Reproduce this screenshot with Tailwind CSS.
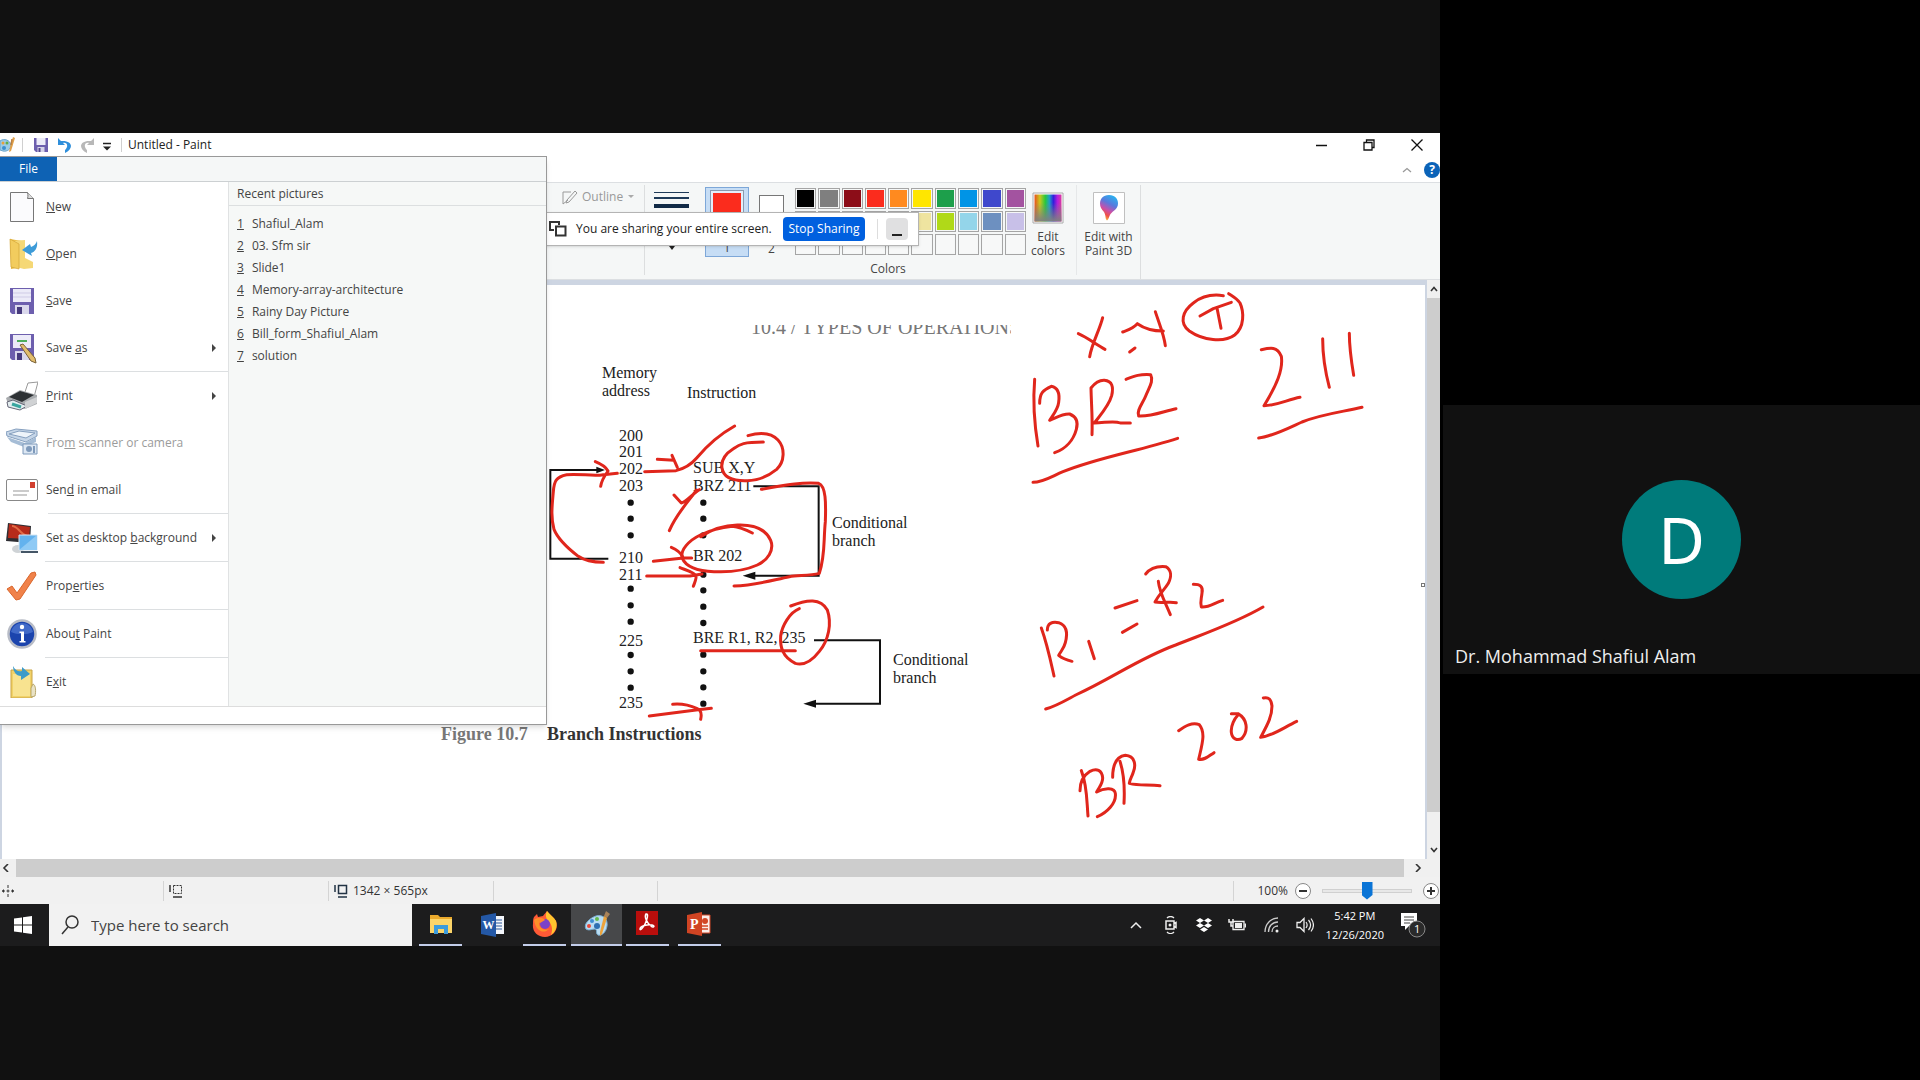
<!DOCTYPE html>
<html lang="en">
<head>
<meta charset="utf-8">
<meta name="viewport" content="width=device-width, initial-scale=1">
<title>Untitled - Paint</title>
<script src="https://cdn.jsdelivr.net/npm/@tailwindcss/browser@4"></script>
</head>
<body class="flex min-h-screen bg-black font-['Open_Sans','Noto_Sans',sans-serif] text-xs text-[#444]">

<!-- Shared screen -->
<main class="flex w-3/4 shrink-0 flex-col justify-center overflow-hidden bg-[#111] pb-px">
  <div class="relative flex flex-col bg-white">

    <!-- Title bar -->
    <header class="flex h-6 items-center justify-between">
      <div class="flex items-center">
        <svg class="h-4 w-4" viewBox="0 0 16 16" aria-hidden="true"><path d="M0 4C4 1 10 3 11 8c0 4-4 7-8 6L0 13z" fill="#9ccbe8" stroke="#6aa5cc"/><circle cx="3" cy="6" r="1.500" fill="#e8a13a"/><circle cx="7" cy="6" r="1.500" fill="#5fae4d"/><circle cx="4" cy="11" r="2" fill="#3b8fd0"/><path d="M13 0l2 1-4 13-2 1 1-5z" fill="#dfa04a"/><path d="M12 2l-1 6" stroke="#b98044" stroke-width="1.500"/></svg>
        <span class="ml-1.5 h-3.5 w-px bg-[#d0d0d0]"></span>
        <button class="ml-2.5" aria-label="Save"><svg class="h-4 w-4" viewBox="0 0 16 16"><path d="M1 1h14v14H3l-2-2z" fill="#6d5fae"/><path d="M3.500 1h9v7h-9z" fill="#ecebf8"/><path d="M4.500 10h7v5h-7z" fill="#d5d2e8"/><path d="M5.500 11h2v4h-2z" fill="#51448c"/></svg></button>
        <button class="ml-2" aria-label="Undo"><svg class="h-4 w-4" viewBox="0 0 16 16"><path d="M1 1v7h7L6 6c4-1 6 3 2 7v3c9-4 8-13-4-12z" fill="#2f8fdb"/></svg></button>
        <button class="ml-1.5" aria-label="Redo"><svg class="h-4 w-4" viewBox="0 0 16 16"><path d="M15 1v7H8l2-2C6 5 4 9 8 13v3C-1 12 0 3 12 4z" fill="#b8b8b8"/></svg></button>
        <button class="ml-2" aria-label="Customize toolbar"><svg class="h-3.5 w-2" viewBox="0 0 8 14"><path d="M0 5.500h8" stroke="#222" stroke-width="1.500"/><path d="M0 8.500h8l-4 4z" fill="#222"/></svg></button>
        <span class="ml-2.5 h-3.5 w-px bg-[#d0d0d0]"></span>
        <h1 class="ml-1.5 text-[#222]">Untitled - Paint</h1>
      </div>
      <div class="flex items-center gap-9 pr-[17px]">
        <button aria-label="Minimize"><svg class="h-3 w-3" viewBox="0 0 12 12"><path d="M1 6.500h11" stroke="#111" stroke-width="1.500"/></svg></button>
        <button aria-label="Restore"><svg class="h-3 w-3" viewBox="0 0 12 12"><path d="M1 3.500h8v7.500H1z M3.500 3V1H11v7.500H9" fill="none" stroke="#111" stroke-width="1.300"/></svg></button>
        <button aria-label="Close"><svg class="h-3 w-3" viewBox="0 0 12 12"><path d="M.5.500l11 11m0-11l-11 11" stroke="#111" stroke-width="1.300"/></svg></button>
      </div>
    </header>

    <!-- Tab strip -->
    <div class="flex h-[25px] items-center justify-end gap-3 overflow-hidden">
      <button aria-label="Collapse ribbon"><svg class="h-2 w-2.5" viewBox="0 0 10 8"><path d="M1 6l4-3.500L9 6" fill="none" stroke="#999" stroke-width="1.300"/></svg></button>
      <button class="h-4 w-4 rounded-full bg-[#0b63b8] text-xs leading-4 font-bold text-white" aria-label="Help">?</button>
    </div>

    <!-- Ribbon -->
    <div class="flex h-[98px] overflow-hidden border-y border-[#dcdfe2] bg-[#f5f7f7] pt-0.5 pl-[562px]">
      <div class="flex h-[90px] w-[83px] items-start border-r border-[#dcdedf] pt-1">
        <button class="flex items-center gap-1 text-[#999]"><svg class="h-4 w-4" viewBox="0 0 16 16"><path d="M1 3h8M1 3v12l5-4M13 2l2 2-8 9-3 1 1-3z" fill="none" stroke="#999"/></svg>Outline<svg class="h-1.5 w-2" viewBox="0 0 8 6"><path d="M1 1h6L4 4z" fill="#aaa"/></svg></button>
      </div>
      <button class="mt-1.5 ml-[9px] flex h-[60px] w-[35px] flex-col items-center justify-between" aria-label="Size">
        <svg class="h-[18px] w-full" viewBox="0 0 35 18"><path d="M0 1.500h35" stroke="#1f3a58"/><path d="M0 7h35" stroke="#1f3a58" stroke-width="2"/><path d="M0 15h35" stroke="#122b47" stroke-width="4"/></svg>
        <svg class="h-1.5 w-2" viewBox="0 0 8 6"><path d="M1 1h6L4 5z" fill="#222"/></svg>
      </button>
      <button class="mt-0.5 ml-4 flex h-[70px] w-11 flex-col items-center justify-between border border-[#7da7d8] bg-[#c6ddf5] pt-[3px]"><span class="h-8 w-8 border-2 border-[#e4eefa] bg-[#fb2c1d] outline outline-[#8a9aae]"></span>1</button>
      <button class="mt-2 ml-2.5 flex h-16 w-[25px] flex-col items-center justify-between"><span class="mt-0.5 h-[25px] w-full border border-[#777] bg-white"></span>2</button>
      <div class="ml-[11px] flex w-[231px] flex-col pt-[3px]">
        <div class="grid w-full grid-cols-10 gap-[2px]" id="swatches"></div>
        <span class="mt-1.5 w-[186px] text-center">Colors</span>
      </div>
      <button class="ml-1.5 flex w-8 flex-col items-center pt-[7px] text-center leading-3.5">
        <svg class="h-8 w-8 shrink-0" viewBox="0 0 32 32"><defs><linearGradient id="hue"><stop offset="0" stop-color="#e8501c"/><stop offset=".2" stop-color="#c8c81e"/><stop offset=".4" stop-color="#28c83c"/><stop offset=".55" stop-color="#1ea0c8"/><stop offset=".7" stop-color="#321edc"/><stop offset=".85" stop-color="#b41edc"/><stop offset="1" stop-color="#dc3ca0"/></linearGradient><linearGradient id="fade" x2="0" y2="1"><stop offset=".3" stop-color="#808080" stop-opacity="0"/><stop offset="1" stop-color="#808080"/></linearGradient></defs><path d="M1 1h30v30H1z" fill="#fff" stroke="#aaa"/><path d="M2.500 2.500h27v27h-27z" fill="url(#hue)"/><path d="M2.500 2.500h27v27h-27z" fill="url(#fade)"/></svg>
        <span class="mt-1.5">Edit colors</span>
      </button>
      <span class="ml-3 h-[90px] w-px bg-[#e6e8e9]"></span>
      <button class="flex w-[64px] flex-col items-center border-r border-[#dcdedf] px-1.5 pt-[7px] text-center leading-3.5">
        <svg class="h-8 w-8 shrink-0" viewBox="0 0 32 32"><defs><linearGradient id="drop" x1=".7" y1="0" x2=".3" y2="1"><stop offset="0" stop-color="#28b4f0"/><stop offset=".35" stop-color="#5a78dc"/><stop offset=".6" stop-color="#c850aa"/><stop offset=".8" stop-color="#f05046"/><stop offset="1" stop-color="#fac83c"/></linearGradient></defs><path d="M.5.500h31v31H.5z" fill="#fff" stroke="#c0c0c0"/><path d="M16 3c6 0 9 4 9 8.500C25 17 20 19 17.500 22 16 24 16 27 14 28.500 12 27 13 23 11 20 8.500 17 7 15 7 11.500 7 7 10 3 16 3z" fill="url(#drop)"/></svg>
        <span class="mt-1.5 whitespace-nowrap">Edit with<br>Paint 3D</span>
      </button>
    </div>

    <!-- Canvas and vertical scroll bar -->
    <div class="flex h-[579px] bg-[#cdd5e2]">
      <section class="relative mt-[5px] ml-[2px] min-w-0 flex-1 overflow-hidden bg-white" aria-label="Drawing canvas">
        <svg class="absolute top-0 left-0 h-[574px] w-[1423px] max-w-none font-['Liberation_Serif','Noto_Sans',serif]" viewBox="2 285 1423 574" font-size="16" fill="#222">
          <defs><clipPath id="cut"><path d="M740 325h271v12H740z"/></clipPath></defs>
          <text x="751" y="334" font-size="20" fill="#777" clip-path="url(#cut)">10.4 / TYPES OF OPERATIONS</text>
          <text x="602" y="378">Memory</text><text x="602" y="396">address</text>
          <text x="687" y="398">Instruction</text>
          <text x="619" y="441">200</text><text x="619" y="457">201</text><text x="619" y="474">202</text><text x="619" y="491">203</text>
          <text x="619" y="563">210</text><text x="619" y="580">211</text><text x="619" y="646">225</text><text x="619" y="708">235</text>
          <text x="693" y="473">SUB X,Y</text><text x="693" y="491">BRZ 211</text><text x="693" y="561">BR 202</text><text x="693" y="643">BRE R1, R2, 235</text>
          <text x="832" y="528">Conditional</text><text x="832" y="546">branch</text>
          <text x="893" y="665">Conditional</text><text x="893" y="683">branch</text>
          <text x="441" y="740" font-size="18" font-weight="bold" fill="#777">Figure 10.7</text>
          <text x="547" y="740" font-size="18" font-weight="bold" fill="#333">Branch Instructions</text>
          <!-- printed dots and connectors -->
          <g transform="translate(540 320) scale(.33333)">
            <path d="M272 548h0m0 48h0m0 50h0m0 160h0m0 50h0m0 49h0m0 100h0m0 49h0m0 49h0M490 548h0m0 48h0m0 50h0m0 118h0m0 47h0m0 49h0m0 49h0m0 95h0m0 50h0m0 48h0m0 49h0" stroke="#111" stroke-width="19" stroke-linecap="round"/>
            <path d="M205 716H31V450h145M640 499h196v268H630M822 961h198v190H815" fill="none" stroke="#111" stroke-width="6"/>
            <path d="M195 450l-26-10v20zM608 767l38-12v24zM790 1151l38-12v24z" fill="#111"/>
          </g>
          <!-- pen strokes over the figure -->
          <g transform="translate(540 320) scale(.33333)" fill="none" stroke="#e0261c" stroke-width="9" stroke-linecap="round" stroke-linejoin="round">
            <path d="M190 727c-30 0-55-4-75-18C85 686 55 660 42 628 32 590 36 560 40 515c2-30 8-45 40-51 40-4 80 6 110 0l42-4M166 425c20 8 32 16 38 28-10 14-20 28-22 46"/>
            <path d="M314 455l94-3c20-5 40-12 62-38 30-36 64-68 114-96M352 418l50 3M396 406l16 36"/>
            <path d="M624 347c35-10 70-8 90 13 22 24 20 66-4 88-30 24-66 36-96 34-34 0-64-10-68-38-4-26 12-44 34-58 20-14 32-20 90-20"/>
            <path d="M402 525l22 24c14-2 34-28 54-40M470 510c-30 40-62 74-82 122"/>
            <path d="M482 650c30-20 70-34 110-35 50-2 86 14 100 46 12 30-10 60-40 74-40 18-90 22-130 20-44-2-84-14-95-40-8-24 20-54 54-70 30-14 60-22 96-26 20 2 40 10 60 20"/>
            <path d="M340 724l90-10h25M394 682c14 6 28 16 34 28M320 768h130l36-6M420 743c20 8 46 16 48 24 2 10-4 20-8 32"/>
            <path d="M664 508c60-10 110-22 172-18 22 8 22 60 20 115-6 60 0 100-18 155-30 8-66 5-90 10-50 10-100 26-166 28"/>
            <path d="M752 858c50-20 90-24 110 12 14 40 4 90-24 124-20 26-44 44-72 36-40-20-46-50-44-82 4-30 26-70 56-82"/>
            <path d="M482 992h284M328 1188l140-18 46-5M398 1153c30-3 56 5 74 13 10 4 14 14 10 32"/>
          </g>
          <g transform="translate(1000 270) scale(.33333)" fill="none" stroke="#e0261c" stroke-width="9" stroke-linecap="round" stroke-linejoin="round">
            <path d="M235 191c28 12 52 32 80 47M308 143c-10 40-32 76-39 117M368 186c14-6 28-8 44-25 20 14 44 22 78 22M466 125c10 32 26 68 30 102M389 246l16-12"/>
            <path d="M670 77c-40-6-70 6-90 22-32 24-44 60-12 84 40 28 104 36 136 12 30-24 28-70 16-96-10-14-22-20-34-28M600 138l40-22 54-19M651 114l12 61"/>
            <path d="M104 328c-6 70 0 140 10 200M119 400c0-30 10-40 35-51 20 4 26 20 22 48-2 20-14 34-27 54 20-8 36-20 60-19 20 8 26 24 20 46-8 30-30 58-65 70"/>
            <path d="M276 494c2-50-2-90-3-140 8-10 20-24 40-23 24 2 28 20 22 46-8 30-32 56-52 82 30 0 60-8 78 0h30M378 328c26-10 40-16 74-14 10 20-6 40-14 62-8 22-30 46-22 62 40 2 74-14 112-22"/>
            <path d="M99 637c30 0 60-20 90-32 110-44 220-60 344-100"/>
            <path d="M784 239c28-6 48-10 60 20 6 40-14 86-52 148 40 0 70-18 108-25M968 206c0 60 8 100 20 146M1048 190c0 44 6 84 13 126M776 504c40-4 90-30 130-48 60-24 120-30 180-44"/>
          </g>
          <g transform="translate(1000 540) scale(.33333)" fill="none" stroke="#e0261c" stroke-width="9" stroke-linecap="round" stroke-linejoin="round">
            <path d="M124 264c18 50 26 90 38 144M142 270c0-20 14-26 34-22 24 8 28 30 20 60-4 18-14 26-20 38 12 10 24 14 40 18M266 304l17 52M345 204l66-22M367 277l44-25"/>
            <path d="M437 102c14-18 36-24 60-22 18 10 18 30 8 50-12 20-26 30-40 56 20 4 44-2 64 2M475 124c4 36 20 60 36 100M580 133c20 0 30 6 26 26-2 20-6 26-2 42 24 2 38-12 64-20"/>
            <path d="M137 507c30-8 60-26 90-42 110-50 190-110 300-150 90-36 180-66 262-114"/>
            <path d="M536 572c20-14 40-26 62-18 20 24 8 60-2 104 16 4 28-8 46-20M694 521h20c28 16 32 50 12 74-14 8-30 2-32-18-2-20 10-42 20-52M790 474c16-4 24 4 26 24 0 34-16 60-34 94 36-4 70-30 108-48"/>
            <path d="M240 752c0-24 8-44 30-58 20-10 36-4 38 20 0 18-10 26-18 42 24-14 54-14 56 4 4 30-26 58-54 70M244 692c18 46 16 90 20 136M338 712c0-34 10-62 38-66 30 2 32 30 24 50-4 14-10 20-12 34 30 8 60 2 92 7M360 664c14 44 14 90 12 126"/>
          </g>
        </svg>
        <span class="absolute top-[298px] right-0 h-1 w-1 border border-[#777] bg-white"></span>
      </section>
      <div class="ml-[2px] flex w-[13px] flex-col bg-[#f0f0f0]">
        <button class="flex h-[18px] items-center justify-center" aria-label="Scroll up"><svg class="h-2 w-2" viewBox="0 0 8 8"><path d="M1 6l3-3.500L7 6" fill="none" stroke="#333" stroke-width="1.600"/></svg></button>
        <div class="h-[514px] bg-[#cdcdcd]"></div>
        <button class="mt-auto flex h-[18px] items-center justify-center" aria-label="Scroll down"><svg class="h-2 w-2" viewBox="0 0 8 8"><path d="M1 2l3 3.500L7 2" fill="none" stroke="#333" stroke-width="1.600"/></svg></button>
      </div>
    </div>

    <!-- Horizontal scroll bar -->
    <div class="flex h-[18px] bg-[#f0f0f0] pr-[18px]">
      <button class="flex w-4 items-center justify-start pl-0.5" aria-label="Scroll left"><svg class="h-2 w-2" viewBox="0 0 8 8"><path d="M6 0L2 4l4 4" fill="none" stroke="#333" stroke-width="1.600"/></svg></button>
      <div class="flex-1 bg-[#cdcdcd]"></div>
      <button class="ml-2.5 flex w-2 items-center" aria-label="Scroll right"><svg class="h-2 w-2" viewBox="0 0 8 8"><path d="M2 0l4 4-4 4" fill="none" stroke="#333" stroke-width="1.600"/></svg></button>
    </div>

    <!-- Status bar -->
    <footer class="flex h-[27px] items-center bg-[#f1f1f1] text-[#333]">
      <div class="flex h-5 w-[164px] items-center border-r border-[#d4d4d4] pl-0.5"><svg class="h-3 w-3" viewBox="0 0 12 12"><path d="M6 0v12M0 6h12" stroke="#333" stroke-dasharray="3 1.500"/><path d="M0 6l2-2v4zM12 6l-2-2v4z" fill="#333"/></svg></div>
      <div class="flex h-5 w-[165px] items-center border-r border-[#d4d4d4] pl-1"><svg class="h-4 w-4" viewBox="0 0 16 16"><path d="M2 2v7M5 14h9" stroke="#333" stroke-width="1.500"/><path d="M5.500 2.500h8v8h-8z" fill="none" stroke="#333" stroke-dasharray="2 1"/></svg></div>
      <div class="flex h-5 w-[165px] items-center gap-1 border-r border-[#d4d4d4] pl-1"><svg class="h-4 w-4" viewBox="0 0 16 16"><path d="M2 2v7M5 14h9" stroke="#234" stroke-width="1.500"/><path d="M5.500 2.500h8v8h-8z" fill="none" stroke="#234" stroke-width="1.500"/></svg>1342 × 565px</div>
      <div class="h-5 w-[164px] border-r border-[#d4d4d4]"></div>
      <div class="ml-auto flex h-5 w-[207px] items-center justify-end overflow-hidden border-l border-[#d4d4d4]">
        <label for="zoom">100%</label>
        <button class="ml-1.5 shrink-0" aria-label="Zoom out"><svg class="h-[18px] w-[18px]" viewBox="0 0 18 18"><circle cx="9" cy="9" r="7.500" fill="#fff" stroke="#888"/><path d="M5 9h8" stroke="#333" stroke-width="2"/></svg></button>
        <input id="zoom" type="range" value="50" class="mx-2.5 h-5 w-[90px] shrink-0 appearance-none bg-transparent [&::-webkit-slider-runnable-track]:h-1 [&::-webkit-slider-runnable-track]:border [&::-webkit-slider-runnable-track]:border-[#d0d0d0] [&::-webkit-slider-runnable-track]:bg-[#e8e8e8] [&::-webkit-slider-thumb]:mt-[-8px] [&::-webkit-slider-thumb]:h-[18px] [&::-webkit-slider-thumb]:w-[11px] [&::-webkit-slider-thumb]:appearance-none [&::-webkit-slider-thumb]:bg-[#0a74d6] [&::-webkit-slider-thumb]:[clip-path:polygon(0_0,100%_0,100%_75%,50%_100%,0_75%)]">
        <button class="shrink-0" aria-label="Zoom in"><svg class="h-[18px] w-[18px]" viewBox="0 0 18 18"><circle cx="9" cy="9" r="7.500" fill="#fff" stroke="#888"/><path d="M5 9h8M9 5v8" stroke="#333" stroke-width="2"/></svg></button>
      </div>
    </footer>

    <!-- Taskbar -->
    <nav class="flex h-[42px] items-stretch bg-[#1c1c1d] text-white">
      <button class="flex w-[49px] items-center pl-3.5" aria-label="Start"><svg class="h-[18px] w-[18px]" viewBox="0 0 18 18"><path d="M0 2.500L8 1.500v7H0zM9 1.300L18 0v8.500H9zM0 9.500h8v7l-8-1zM9 9.500h9V18l-9-1.300z" fill="#fff"/></svg></button>
      <label class="flex w-[363px] items-center gap-3 bg-[#f2f2f2] pl-3 text-[#444]">
        <svg class="h-5 w-[18px] shrink-0" viewBox="0 0 18 20"><circle cx="11" cy="7" r="6" fill="none" stroke="#333" stroke-width="1.500"/><path d="M7 12l-6 7" stroke="#333" stroke-width="1.500"/></svg>
        <input type="text" aria-label="Search" placeholder="Type here to search" class="min-w-0 flex-1 bg-transparent text-[15px] outline-none placeholder:text-[#444]">
      </label>
      <div class="flex gap-[1px] pl-[3px]">
        <button class="flex w-[51px] items-center justify-center" aria-label="File Explorer"><span class="flex h-full w-[43px] items-center justify-center border-b-2 border-[#c3cdea]"><svg class="h-6 w-6" viewBox="0 0 24 24"><path d="M1 3h8l2 2h12v16H1z" fill="#e9a92c"/><path d="M1 7h22v14H1z" fill="#fbd469"/><path d="M5 13h14v9h-4v-5H9v5H5z" fill="#3c9bdc"/></svg></span></button>
        <button class="flex w-[51px] items-center justify-center" aria-label="Word"><svg class="h-6 w-6" viewBox="0 0 24 24"><path d="M12 3h11v18H12z" fill="#f4f6fb"/><path d="M14 7h7M14 10h7M14 13h7M14 16h7" stroke="#2b579a"/><path d="M0 3l15-3v24L0 21z" fill="#2458a6"/><text x="1.500" y="16" font-family="Liberation Serif, serif" font-size="12" font-weight="bold" fill="#fff">W</text></svg></button>
        <button class="flex w-[51px] items-center justify-center" aria-label="Firefox"><span class="flex h-full w-[43px] items-center justify-center border-b-2 border-[#c3cdea]"><svg class="h-[26px] w-[26px]" viewBox="0 0 26 26"><path d="M2 6l3-3 1 3 5-1c1-2 3-3 4-5 2 3 7 6 9 10 3 9-3 16-11 16S0 20 1 13c0-3 0-5 1-7z" fill="#ff5a36"/><path d="M15 0c2 3 7 6 9 10 2 6-1 11-5 14 2-6 1-11-3-14-2-3-3-6-1-10z" fill="#ffc52e"/><path d="M2 9c4-3 8-2 9 0l-4 3c0 5 5 8 10 6-5 5-13 3-15-9z" fill="#ff9128"/><circle cx="13" cy="13" r="5" fill="#7b42c8"/><path d="M5 8c3-2 7-1 8 1l-5 3z" fill="#ff8a2a"/></svg></span></button>
        <button class="flex w-[51px] items-center justify-center border-b-2 border-[#c3cdea] bg-[#47484a]" aria-label="Paint"><svg class="h-[26px] w-[26px]" viewBox="0 0 26 26"><path d="M12 5c8-2 12 4 11 10-1 7-6 10-9 9-3-2 0-5-3-6-3 0-6 2-9 0-3-5 4-11 10-13z" fill="#b9dcf2" stroke="#78aed3"/><circle cx="5" cy="15" r="2" fill="#e84a3c"/><circle cx="8" cy="10" r="2" fill="#3f8dd2"/><circle cx="13" cy="8" r="2" fill="#63b74f"/><circle cx="13" cy="15" r="3" fill="#2f6fb2"/><path d="M22 0l4 3-3 4-3-2z" fill="#a98258"/><path d="M20 5l3 2-5 16-2 2v-4z" fill="#eba33c"/></svg></button>
        <button class="flex w-[48px] items-center justify-center" aria-label="Acrobat Reader"><span class="flex h-full w-[43px] items-center justify-center border-b-2 border-[#c3cdea]"><svg class="mb-0.5 h-6 w-[22px]" viewBox="0 0 22 24"><path d="M0 0h22v24H0z" fill="#b90e0c"/><path d="M10 3c3-1 1 6-1 10-2 4-5 7-5 5 0-3 8-5 12-4s1 3-1 1c-4-3-7-9-5-12z" fill="none" stroke="#fff" stroke-width="1.500"/></svg></span></button>
        <button class="flex w-[54px] items-center justify-center" aria-label="PowerPoint"><span class="flex h-full w-[43px] items-center justify-center border-b-2 border-[#c3cdea]"><svg class="h-6 w-6" viewBox="0 0 24 24"><path d="M12 3h11v18H12z" fill="#fbeee9" stroke="#d24726"/><circle cx="18" cy="9" r="3" fill="#d24726"/><path d="M15 14h6M15 17h6" stroke="#d24726" stroke-width="1.500"/><path d="M0 3l15-3v24L0 21z" fill="#d04423"/><text x="3" y="17" font-family="Liberation Serif, serif" font-size="14" font-weight="bold" fill="#fff">P</text></svg></span></button>
      </div>
      <div class="ml-auto flex items-center gap-4 pr-3.5">
        <button aria-label="Hidden icons"><svg class="h-2 w-3" viewBox="0 0 12 8"><path d="M1 7l5-5 5 5" fill="none" stroke="#eee" stroke-width="1.500"/></svg></button>
        <button class="ml-1.5" aria-label="Meet now"><svg class="h-[18px] w-3.5" viewBox="0 0 14 18"><path d="M2 5h8v8H2zM10 7.500l2-1v5l-2-1" fill="none" stroke="#eee" stroke-width="1.500"/><circle cx="6" cy="9" r="1.500" fill="#eee"/><path d="M3 2c2-2 5-2 7 0M3 16c2 2 5 2 7 0" fill="none" stroke="#eee" stroke-width="1.300"/></svg></button>
        <button class="ml-0.5" aria-label="Dropbox"><svg class="h-4 w-4" viewBox="0 0 16 16"><path d="M4 1l4 2.500L4 6 0 3.500zM12 1l4 2.500L12 6 8 3.500zM4 6l4 2.500L4 11 0 8.500zM12 6l4 2.500L12 11 8 8.500zM8 10l4 2.500L8 15l-4-2.500z" fill="#fff"/></svg></button>
        <button aria-label="Battery"><svg class="h-3.5 w-[18px]" viewBox="0 0 18 14"><path d="M5 3.500h11v8H5z" fill="none" stroke="#eee" stroke-width="1.300"/><path d="M7 5h7v5H7zM16.500 5.500H18v4h-1.500z" fill="#eee"/><path d="M1 1v3h4V1M3 4v4h2" fill="none" stroke="#eee" stroke-width="1.500"/></svg></button>
        <button class="ml-0.5" aria-label="Network"><svg class="h-4 w-4" viewBox="0 0 16 16"><path d="M1 15C1 7 7 1 14 1M4.500 15c0-6 4-10 9.500-10M8 15c0-4 3-6 6-6" fill="none" stroke="#ccc" stroke-width="1.300"/><circle cx="13" cy="14" r="1.500" fill="#eee"/></svg></button>
        <button aria-label="Volume"><svg class="h-4 w-[18px]" viewBox="0 0 18 16"><path d="M1 5.500h3l4-4v13l-4-4H1z" fill="none" stroke="#eee" stroke-width="1.300"/><path d="M10 5c1.500 2 1.500 4 0 6M12.500 3c2.500 3 2.500 7 0 10M15 1.500c3 4 3 9 0 13" fill="none" stroke="#eee" stroke-width="1.200"/></svg></button>
        <time class="-ml-1 text-center text-[11px] leading-[19px]" datetime="2020-12-26T17:42">5:42 PM<br>12/26/2020</time>
        <button aria-label="Notifications"><svg class="h-[26px] w-[26px]" viewBox="0 0 26 26"><path d="M1 1h16v13H9l-4 4v-4H1z" fill="#fff"/><path d="M4 5h10M4 8h10M4 11h6" stroke="#444"/><circle cx="17" cy="17" r="8" fill="#2a2a2a" stroke="#888"/><text x="14" y="21" font-size="11" fill="#fff">1</text></svg></button>
      </div>
    </nav>

    <!-- Screen-sharing notice -->
    <div class="absolute top-[79px] left-[540px] flex h-[34px] w-[379px] items-center border border-[#b4b4b4] bg-white pl-2 text-[#222] shadow-sm">
      <svg class="h-4 w-[18px]" viewBox="0 0 18 16"><path d="M5 9H1V1h9v3M7 5.500h9.500v9H7z" fill="none" stroke="#333" stroke-width="2"/></svg>
      <span class="ml-[9px] w-[207px] text-xs whitespace-nowrap">You are sharing your entire screen.</span>
      <button class="h-6 w-[82px] rounded bg-[#0060df] text-xs whitespace-nowrap text-white">Stop Sharing</button>
      <span class="ml-3 h-5 w-px bg-[#ddd]"></span>
      <button class="ml-2 flex h-[22px] w-[22px] items-end justify-center rounded bg-[#e0e0e1] pb-1" aria-label="Minimize notice"><span class="h-0.5 w-2.5 bg-[#222]"></span></button>
    </div>

    <!-- File menu -->
    <div class="absolute top-[23px] left-0 flex h-[569px] w-[547px] flex-col border-y border-r border-[#999] bg-white shadow-md">
      <div class="flex h-[25px] shrink-0 border-b border-[#ccd0d2] bg-[#f5f7f7]"><button class="w-[57px] bg-[#0e62b4] text-white">File</button></div>
      <div class="flex min-h-0 flex-1 border-b border-[#ddd]">
        <ul class="flex w-[228px] flex-col pt-px text-[#444]">
          <li><button class="flex h-[47px] w-full items-center gap-2 pl-1.5"><svg class="h-8 w-8" viewBox="0 0 32 32"><path d="M4.500 1.500h17l6 6v23h-23z" fill="#fbfbfd" stroke="#777"/><path d="M21.500 1.500c1 3 0 6 0 6h6" fill="#ddd" stroke="#777"/></svg><span><u>N</u>ew</span></button></li>
          <li><button class="flex h-[47px] w-full items-center gap-2 pl-1.5"><svg class="h-8 w-8" viewBox="0 0 32 32"><path d="M4 1l12 2v26L5 31z" fill="#e8b83e"/><path d="M6 3l13-1v18l8 4v6l-9 1-12-3z" fill="#f5d876"/><path d="M4 1l9 5v25l-8-2z" fill="#f2cc5e" stroke="#d4a63a" stroke-width=".7"/><path d="M16 12l8-6 1 3c3-1 5-3 6-6 1 7-2 11-6 12l1 3z" fill="#3d9bd8"/></svg><span><u>O</u>pen</span></button></li>
          <li><button class="flex h-[47px] w-full items-center gap-2 pl-1.5"><svg class="h-8 w-8" viewBox="0 0 32 32"><path d="M4 3h24v26H6l-2-2z" fill="#6d5fae"/><path d="M7 4h18v13H7z" fill="#ecebf8"/><path d="M7 8h18M7 12h18" stroke="#cfcbe6"/><path d="M9 20h14v9H9z" fill="#dad8ec"/><path d="M11 22h5v7h-5z" fill="#473b7d"/></svg><span><u>S</u>ave</span></button></li>
          <li><button class="flex h-[47px] w-full items-center gap-2 pl-1.5"><svg class="h-8 w-8" viewBox="0 0 32 32"><path d="M4 2h24v26H6l-2-2z" fill="#6d5fae"/><path d="M7 3h18v13H7z" fill="#ecebf8"/><path d="M11 9h10" stroke="#4cae5b" stroke-width="2"/><path d="M9 19h14v9H9z" fill="#dad8ec"/><path d="M11 21h5v7h-5z" fill="#473b7d"/><path d="M14 13l3-1 12 14 1 5-5-2z" fill="#e2bd6c" stroke="#7a6238"/></svg><span class="flex-1 text-left">Save <u>a</u>s</span><span class="mr-3 h-0 w-0 border-y-4 border-l-4 border-y-transparent border-l-[#444]"></span></button></li>
          <li class="ml-[45px] h-px bg-[#dcdfe1]"></li>
          <li><button class="flex h-[47px] w-full items-center gap-2 pl-1.5"><svg class="h-8 w-8" viewBox="0 0 32 32"><path d="M22 3l10-1-4 15-10-2z" fill="#fff" stroke="#999"/><path d="M0 18l14-8 17 5v9l-12 5-17-5z" fill="#a9acaf"/><path d="M3 17l11-6 14 4-12 7z" fill="#2d3134"/><path d="M1 22l6-2 14 6-7 4-12-3z" fill="#e4eef0" stroke="#667"/><path d="M6 24l9 3" stroke="#3aa6a0" stroke-width="3"/><path d="M19 22l12-5v6l-12 6z" fill="#d0d2d4"/></svg><span class="flex-1 text-left"><u>P</u>rint</span><span class="mr-3 h-0 w-0 border-y-4 border-l-4 border-y-transparent border-l-[#444]"></span></button></li>
          <li><button disabled class="flex h-[47px] w-full items-center gap-2 pl-1.5 text-[#9b9b9b]"><svg class="h-8 w-8" viewBox="0 0 32 32"><path d="M0 5l10-3 21 2v5l-11 6L1 9z" fill="#c6d6e8" stroke="#86a0bf"/><path d="M3 7l10-3 16 2-9 5z" fill="#eef4fa" stroke="#86a0bf"/><path d="M1 10l18 6 11-6v5l-12 5-13-5z" fill="#a6bdd6"/><path d="M17 17h14v10H17z" fill="#dce7f3" stroke="#7f9abb"/><circle cx="23" cy="22" r="3" fill="#7f9abb"/><path d="M28 19v7" stroke="#7f9abb" stroke-width="2"/></svg><span>Fro<u>m</u> scanner or camera</span></button></li>
          <li><button class="flex h-[47px] w-full items-center gap-2 pl-1.5"><svg class="h-8 w-8" viewBox="0 0 32 32"><rect x=".5" y="5.500" width="31" height="21" rx="1.500" fill="#fff" stroke="#888"/><path d="M24 8h5v6h-5z" fill="#d1402f"/><path d="M7 17h16M7 21h14" stroke="#bbb" stroke-width="1.500"/></svg><span>Sen<u>d</u> in email</span></button></li>
          <li class="ml-12 h-px bg-[#dcdfe1]"></li>
          <li><button class="flex h-[47px] w-full items-center gap-2 pl-1.5"><svg class="h-8 w-8" viewBox="0 0 32 32"><path d="M2 1l23 3-1 17-24-2z" fill="#2e2e33"/><path d="M3 2l21 3-1 12L2 16z" fill="#b62b1b"/><path d="M6 4c6 0 8 8 15 10" stroke="#e26a45" fill="none" stroke-width="2"/><ellipse cx="12" cy="27" rx="6" ry="4" fill="#cfd3d6"/><path d="M13 13h18v15H13z" fill="#63b2ee" stroke="#d7e6f2"/><path d="M13 28l18-15v15z" fill="#8fcaf5"/><path d="M15 30h17" stroke="#456" stroke-width="2"/></svg><span class="flex-1 text-left whitespace-nowrap">Set as desktop <u>b</u>ackground</span><span class="mr-3 h-0 w-0 border-y-4 border-l-4 border-y-transparent border-l-[#444]"></span></button></li>
          <li class="ml-[45px] h-px bg-[#dcdfe1]"></li>
          <li><button class="flex h-[47px] w-full items-center gap-2 pl-1.5"><svg class="h-8 w-8" viewBox="0 0 32 32"><path d="M1 19l5-3 5 7L25 3l4-1 1 3-16 24-4 1z" fill="#f0824a" stroke="#d9662c"/></svg><span>Prop<u>e</u>rties</span></button></li>
          <li class="ml-12 h-px bg-[#dcdfe1]"></li>
          <li><button class="flex h-[47px] w-full items-center gap-2 pl-1.5"><svg class="h-8 w-8" viewBox="0 0 32 32"><circle cx="16" cy="16" r="13.500" fill="#1b44ad" stroke="#b8bcc6" stroke-width="2.500"/><path d="M5 14c3-12 19-12 22 0-7 3-15 3-22 0z" fill="#5c84da" opacity=".6"/><circle cx="16" cy="9" r="2.200" fill="#fff"/><path d="M13.500 13.500H18V23h1.500v1.500h-6V23H15v-8h-1.500z" fill="#fff"/></svg><span>Abou<u>t</u> Paint</span></button></li>
          <li class="ml-[45px] h-px bg-[#dcdfe1]"></li>
          <li><button class="flex h-[47px] w-full items-center gap-2 pl-1.5"><svg class="h-8 w-8" viewBox="0 0 32 32"><path d="M5 4h21v28H5z" fill="#f1d269" stroke="#c9a344"/><path d="M7 8h17v22H7z" fill="#f8e390"/><path d="M27 18c3 1 3 8 2 12l-4 1v-9z" fill="#e9e2c5" stroke="#b8a76b"/><path d="M7 0c2 4 5 6 9 5V1l8 7-9 6v-4C10 10 7 5 7 0z" fill="#3d9bc8"/></svg><span>E<u>x</u>it</span></button></li>
        </ul>
        <section class="min-w-0 flex-1 border-l border-[#e0e2e3] bg-[#f6f8f7]">
          <h2 class="h-6 border-b border-[#dcdfe0] pl-2 leading-6">Recent pictures</h2>
          <ul class="pt-[7px] pl-2 leading-[22px]">
            <li class="flex gap-2"><u>1</u>Shafiul_Alam</li>
            <li class="flex gap-2"><u>2</u>03. Sfm sir</li>
            <li class="flex gap-2"><u>3</u>Slide1</li>
            <li class="flex gap-2"><u>4</u>Memory-array-architecture</li>
            <li class="flex gap-2"><u>5</u>Rainy Day Picture</li>
            <li class="flex gap-2"><u>6</u>Bill_form_Shafiul_Alam</li>
            <li class="flex gap-2"><u>7</u>solution</li>
          </ul>
        </section>
      </div>
      <div class="h-[17px] shrink-0"></div>
    </div>
  </div>
</main>

<!-- Participant -->
<aside class="flex min-w-0 flex-1 flex-col justify-center pb-px pl-[3px]">
  <figure class="relative flex aspect-video items-center justify-center bg-[#111]">
    <div class="flex h-[119px] w-[119px] items-center justify-center rounded-full bg-[#007b7b] font-['Noto_Sans',sans-serif] text-[64px] text-white">D</div>
    <figcaption class="absolute bottom-1 left-3 text-lg text-[#eee]">Dr. Mohammad Shafiul Alam</figcaption>
  </figure>
</aside>

<script>
  const colors = ['#000', '#7f7f7f', '#8c0d18', '#fb2c1d', '#ff8a1f', '#ffe600', '#1d9f4b', '#0094e6', '#3f48cc', '#a353a0',
    '#fff', '#c3c3c3', '#b97a57', '#ffaec9', '#ffc90e', '#efe4a0', '#b0d918', '#94d5ea', '#6d90c0', '#c8c0e8'];
  const box = document.getElementById('swatches');
  for (let i = 0; i < 30; i++) {
    const b = document.createElement('button');
    b.className = 'h-[21px] border border-[#a5a5a5] p-px';
    b.setAttribute('aria-label', 'Color ' + (i + 1));
    const fill = document.createElement('span');
    fill.className = 'block h-full w-full';
    fill.style.backgroundColor = colors[i] || '#f7f8f8';
    b.append(fill);
    box.append(b);
  }
</script>
</body>
</html>
